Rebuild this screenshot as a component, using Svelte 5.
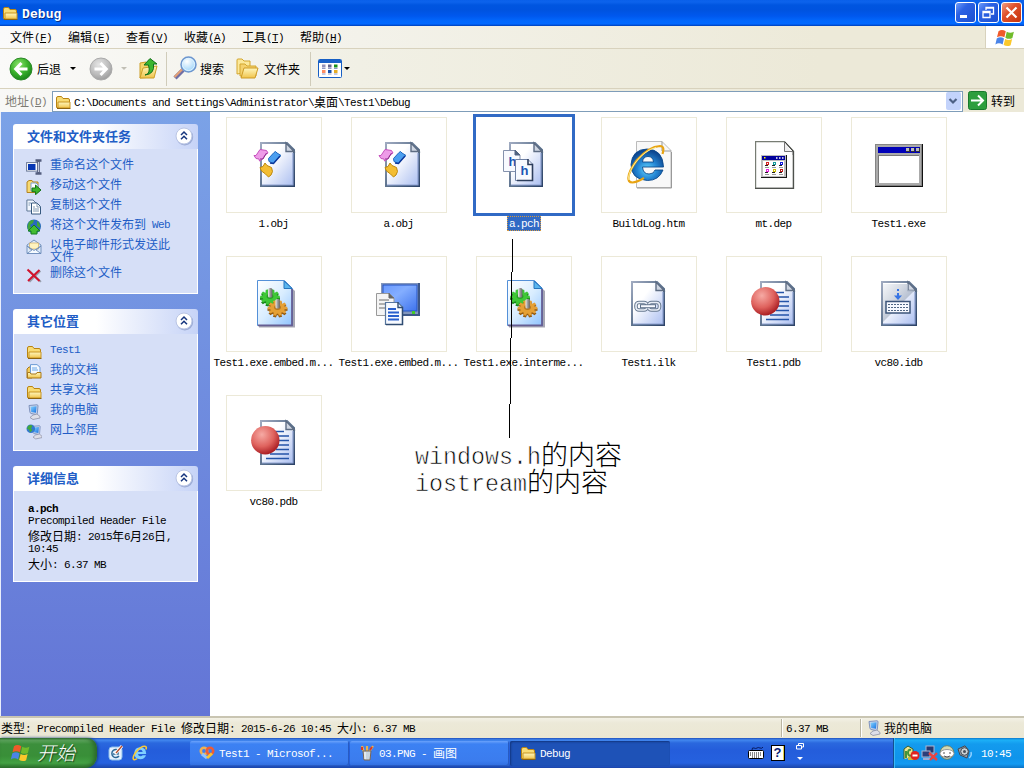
<script>
  const menus = [['文件', 'F'], ['编辑', 'E'], ['查看', 'V'], ['收藏', 'A'], ['工具', 'T'], ['帮助', 'H']];
  const tasks = [
    ['rename', ['重命名这个文件'], 20],
    ['move', ['移动这个文件'], 20],
    ['copy', ['复制这个文件'], 20],
    ['web', ['将这个文件发布到 Web'], 20],
    ['mail', ['以电子邮件形式发送此', '文件'], 28],
    ['delete', ['删除这个文件'], 20]
  ];
  const places = [
    ['folder', ['Test1'], 20],
    ['docs', ['我的文档'], 20],
    ['folder', ['共享文档'], 20],
    ['computer', ['我的电脑'], 20],
    ['network', ['网上邻居'], 20]
  ];
  const files = [
    ['obj', '1.obj'], ['obj', 'a.obj'], ['pch', 'a.pch', true], ['htm', 'BuildLog.htm'], ['dep', 'mt.dep'], ['exe', 'Test1.exe'],
    ['gear', 'Test1.exe.embed.m...'], ['res', 'Test1.exe.embed.m...'], ['gear', 'Test1.exe.interme...'], ['ilk', 'Test1.ilk'], ['pdb', 'Test1.pdb'], ['idb', 'vc80.idb'],
    ['pdb', 'vc80.pdb']
  ];
  const teeth = [0, 36, 72, 108, 144];
  const runs = (s) => s.match(/[\u2e80-\uffff]+|[^\u2e80-\uffff]+/g) ?? [];
  const isLatin = (r) => r.charCodeAt(0) < 0x2e80;
</script>

{#snippet t(s)}<span class="t">{#each runs(s) as r}<span class:l={isLatin(r)}>{r}</span>{/each}</span>{/snippet}

{#snippet page(x, w)}
  <path d="M{x + 1} 2H{x + w - 8}L{x + w - 1} 9V45H{x + 1}Z" fill="url(#paper)" stroke="url(#edge)" stroke-width="2" />
  <path d="M{x + 2} 44H{x + w - 2}V12" fill="none" stroke="#8b9fd0" stroke-width="1.2" />
  <path d="M{x + w - 9} 2V10.5H{x + w - 1}Z" fill="#cfd6e2" stroke="#5d6c83" stroke-width="1.4" />
{/snippet}

{#snippet cog(cx, cy, color, dark)}
  <g transform="translate({cx} {cy})">
    <g fill={dark} transform="translate(0 1.6) scale(1 .78)">
      {#each teeth as a}<rect x="-10" y="-1.6" width="20" height="3.2" transform="rotate({a})" />{/each}
      <circle r="7.4" />
    </g>
    <g fill={color} transform="scale(1 .78)">
      {#each teeth as a}<rect x="-9.8" y="-1.6" width="19.6" height="3.2" transform="rotate({a})" />{/each}
      <circle r="7.4" />
    </g>
    <ellipse cy="-.5" rx="3.4" ry="2.4" fill={dark} opacity=".6" />
    <rect x="-2" y="-9" width="4.4" height="9.5" rx="1.6" fill="url(#pin)" />
  </g>
{/snippet}

{#snippet smallFolder()}
  <path d="M1.5 13.5V4Q1.5 2.5 3 2.5H6.5L8 4.5H13Q14.5 4.5 14.5 6V13.5Z" fill="#f8dc75" stroke="#b98412" />
  <path d="M3 14V8H15V14Z" fill="url(#fold)" stroke="#c89522" />
  <path d="M2 14.5H15.5" stroke="#8d6412" />
{/snippet}

{#snippet pc()}
  <path d="M3 1.5L11 .8Q12 .8 12 2L11.3 9.5Q11 10.5 10 10.5L5 9.5Q4 9 3.9 8Z" fill="#cbd5ea" stroke="#7f93be" />
  <path d="M4.5 2.7L10.6 2.2L10 8.8L5.2 8Z" fill="url(#screen)" />
  <path d="M7 11L11 10L14 12.5V14L7 15.5L4 13.5Z" fill="#dedfe8" stroke="#8d90a5" stroke-width=".8" />
{/snippet}

{#snippet flag()}
  <path d="M3.2 3.3Q6 1.5 9 3.4L7.9 8.2Q5 6.4 2 8.2Z" fill="#f05a2a" />
  <path d="M9.8 3.8Q12.5 5.5 15.5 3.8L14.3 8.8Q11.5 10.3 8.7 8.5Z" fill="#70bb2b" />
  <path d="M1.8 9.1Q4.8 7.3 7.6 9.1L6.5 14Q3.5 12.1.7 14Z" fill="#4a84e8" />
  <path d="M8.5 9.5Q11.2 11.2 14.1 9.6L12.9 14.5Q10.2 16 7.3 14.3Z" fill="#fbc82b" />
{/snippet}

{#snippet ie(c)}
  <path fill-rule="evenodd" d="M8.2 2.2Q14 2.2 14.2 9H6Q6.3 11.3 8.5 11.3Q10 11.3 10.6 10.2H14Q12.6 14.2 8.3 14.2Q2.4 14 2.3 8.2Q2.5 2.4 8.2 2.2ZM6 7H10.7Q10.4 4.8 8.3 4.8Q6.3 4.9 6 7Z" fill={c} />
  <path d="M13.8 4.5Q15.2 1.5 12.8 1.2Q9 1 4.2 6.8Q.6 11.7 1.3 13.9Q2 15.6 5 13.6" fill="none" stroke="#f9c936" stroke-width="1.6" />
{/snippet}

{#snippet icon(name)}
  <svg class="i16" viewBox="0 0 16 16">
    {#if name === 'folder'}{@render smallFolder()}
    {:else if name === 'ie'}{@render ie('#7fd0ff')}
    {:else if name === 'computer'}{@render pc()}
    {:else if name === 'docs'}
      <path d="M1 14V5L3 3H6V14Z" fill="#f3cc59" stroke="#a9791b" />
      <path d="M4.5.6H11L14 3.2V12H4.5Z" fill="#f4f9ff" stroke="#6d9bd4" />
      <path d="M6 4H11M6 6H12" stroke="#69a6e8" />
      <path d="M1.5 14V8.5H4L5 10H10L11 8.5H15V14Z" fill="url(#fold)" stroke="#a9791b" />
    {:else if name === 'network'}
      <g transform="translate(3.4 1) scale(.9)">{@render pc()}</g>
      <circle cx="4.8" cy="4.8" r="4.3" fill="#3378cf" />
      <path d="M2 2Q5 0 6.5 2L5 4.5L6.5 6L4 8.5L3 5.5L1 5Z" fill="#42a93b" />
    {:else if name === 'rename'}
      <rect x=".6" y="3.6" width="11.5" height="8.5" fill="#fff" stroke="#6a7897" />
      <rect x="2" y="5" width="7.5" height="6" fill="#0636b4" />
      <path d="M9.5 1.5H15.5M9.5 14.5H15.5M12.5 2V14" stroke="#535d7e" stroke-width="2.6" />
      <path d="M12.5 3V13" stroke="#c5ccdf" stroke-width="1" />
    {:else if name === 'move'}
      <path d="M1 13.5V3L3 1.5H6L7 3H12V13.5Z" fill="#f7d971" stroke="#b38321" />
      <path d="M5 4H10L12 6V12H5Z" fill="#fff" stroke="#7b9fd2" />
      <path d="M6 9H9.5V6L15 11L9.5 15.7V12.7H6Z" fill="#3cb52b" stroke="#157517" />
    {:else if name === 'copy'}
      <path d="M.9 1H7L10 4V12H.9Z" fill="#f2f7ff" stroke="#607897" />
      <path d="M5.5 4H11L14.5 7.5V15H5.5Z" fill="#fff" stroke="#36597f" />
      <path d="M11 4V8H14.5M7 8H9M7 10H13M7 12H13M2.5 4H5M2.5 6H4" fill="none" stroke="#62819e" stroke-width=".8" />
    {:else if name === 'web'}
      <circle cx="8" cy="7.5" r="7" fill="#2869bf" />
      <path d="M3 3Q5 .5 8 1L7 4L4 6L5 8L3 12Q0 8 3 3ZM11 2Q15 5 14 9L11 7Z" fill="#41a63b" />
      <path d="M8 6L14 12H11L11 15L5 15V12H2Z" fill="#43bd31" stroke="#167c21" />
    {:else if name === 'mail'}
      <path d="M1 6L8 1L15 6V14.5H1Z" fill="#dceafb" stroke="#7794bd" />
      <path d="M3.5 4H12.5V10H3.5Z" fill="#fff3bf" stroke="#d4af62" stroke-width=".7" />
      <path d="M1 7L6 11L1 14.5H15L10 11L15 7L8 11.5Z" fill="#f6fbff" stroke="#6384b6" stroke-width=".8" />
    {:else if name === 'delete'}
      <path d="M2 2.5L14 14M13.5 3L2.5 14" stroke="#989fac" stroke-width="2" transform="translate(.9 .9)" />
      <path d="M1.5 2.5L13.5 14M13.5 3L2 14" stroke="#d2132d" stroke-width="2" />
    {/if}
  </svg>
{/snippet}

{#snippet fileIcon(name)}
  <svg class="i48" viewBox="0 0 48 48">
    {#if name === 'obj'}
      {@render page(10, 35)}
      <g stroke-width="1">
        <path d="M4 14.5H6L10 8.5L16.5 9.5L18 12L15 14L12.5 18L9.5 20L9 18L6 17.5Z" fill="#ee9ce8" stroke="#c650bd" />
        <path d="M10 18L13 18L16.5 12" stroke="#8b2c8c" fill="none" />
        <path d="M18.5 17.5L24 11.5L25.5 10.5L27 12L31 14.5L27 18L23.5 22.5L19 20.5Z" fill="#4b9ff0" stroke="#1e68be" />
        <path d="M20 22L23.5 22.5L30 15" stroke="#0a369a" fill="none" stroke-width="1.4" />
        <path d="M10 26.5L13 25.5L15 22L17 24.5L21.5 26.5L22.5 30.5L21 34L18.5 36L15.5 33L11.5 30Z" fill="#f3bd32" stroke="#bd880b" />
      </g>
    {:else if name === 'pch'}
      {@render page(9, 34)}
      <path d="M3.5 9.5H15L20 14V30.5H3.5Z" fill="#f8faff" stroke="#8592ad" /><path d="M15 9V14H20Z" fill="#526582" stroke="#526582" />
      <text x="8.5" y="25" class="h">h</text>
      <path d="M15.5 18.5H28L32.5 23V39.5H15.5Z" fill="#f8faff" stroke="#7082a5" /><path d="M28 18V23.5H32.5V39.5H17" fill="none" stroke="#2d3e5c" stroke-width="1.6" />
      <text x="20.5" y="34" class="h">h</text>
    {:else if name === 'htm'}
      <path d="M11.5.5H37L46 9.5V46.5H11.5Z" fill="#f8f8f8" stroke="#bbb" /><path d="M37 .5V10H46M46.5 11V47H12" fill="none" stroke="#999" />
      <path fill-rule="evenodd" d="M22 8Q38 8.5 38.5 26H17.5Q18 33 24 33Q29 33 30 29H38Q34 39.5 22.5 39.5Q6 38.5 6 23.5Q7 8.5 22 8ZM17.5 21H28.5Q28 15.5 23 15.5Q18 15.5 17.5 21Z" fill="url(#ieb)" stroke="#0b4a8c" stroke-width=".9" />
      <path d="M37.5 13Q40 5 35 5Q24 5.5 12 19Q1 34 4 40Q7 44 19 37" fill="none" stroke="#e8a413" stroke-width="2.2" />
      <path d="M31 6.5Q20 9 10 22Q2 34 4 39" fill="none" stroke="#fff19a" stroke-width="1" />
    {:else if name === 'dep'}
      <path d="M5.6.6H34.5L43.4 10V47.4H5.6Z" fill="#fefefe" stroke="#777c73" stroke-width="1.2" />
      <path d="M34.5 1V10.5H43V14" fill="#eee" stroke="#777" /><path d="M35 1L43 10" stroke="#333" />
      <path d="M43.5 10V47.5H5" fill="none" stroke="#4e514d" stroke-width="1.3" />
      <rect x="11" y="14" width="26" height="23" fill="#161616" /><rect x="11" y="14" width="25" height="22" fill="#bdbdbd" />
      <rect x="12" y="15" width="23" height="4" fill="#00009b" /><path d="M26 17H34" stroke="#fff" stroke-width="1.5" stroke-dasharray="1.5 1.5" /><rect x="14" y="16" width="1.5" height="1.5" fill="#ff0" />
      <rect x="13" y="20" width="21" height="15" fill="#fff" />
      {#each ['#d32020', '#149b99', '#1018dc', '#e521df', '#c8bc00', '#bd1a19'] as c, i}
        <g transform="translate({15 + (i % 3) * 7} {21 + Math.floor(i / 3) * 7})"><rect width="3" height="3" x="1" fill={c} /><path d="M0 3.5H3" stroke="#222" /><path d="M0 5.5H4" stroke="#999" /><rect x="2" y="1" width="1" height="1" fill="#fff" /></g>
      {/each}
    {:else if name === 'exe'}
      <rect x="0" y="3" width="48" height="43" fill="#111" /><rect x="0" y="3" width="47" height="42" fill="#858585" /><rect x="1" y="4" width="45" height="40" fill="#aaa" />
      <rect x="3" y="6" width="42" height="6" fill="#0000b8" />
      {#each [31, 36, 41] as x}<rect {x} y="7" width="4" height="4" fill="#333" /><rect {x} y="7" width="3" height="3" fill="#bbb" />{/each}
      <rect x="3" y="14" width="41" height="28" fill="#777" /><rect x="4" y="15" width="40" height="27" fill="#fff" />
    {:else if name === 'gear'}
      <path d="M9 3H36L45 11V47.5H9Z" fill="#3a3a56" opacity=".45" />
      <path d="M7.5.5H34.5L42.5 8.5V45.5H7.5Z" fill="url(#gearPage)" stroke="#5490d8" />
      <path d="M42 9V45.3H8" fill="none" stroke="#665e93" stroke-width="1.8" /><path d="M34 1V8.5H42Z" fill="#59b5ee" stroke="#2876bd" />
      {@render cog(20, 17, '#3fc736', '#19861b')}
      {@render cog(27.5, 28, '#e5a035', '#965b10')}
    {:else if name === 'res'}
      <rect x="6" y="3" width="39" height="33" fill="#3d5786" /><rect x="6" y="3" width="37" height="31" fill="#8296bd" /><rect x="8" y="5" width="34" height="26" fill="url(#monitor)" stroke="#2454c5" />
      <rect x="37" y="31" width="3" height="3" fill="#43cb26" />
      <path d="M1.5 13.5H14L19 18V35.5H1.5Z" fill="#f4f4f4" stroke="#999" /><path d="M14 13V18H19" fill="#666" stroke="#666" /><path d="M4 20H14M4 24H16M4 28H12" stroke="#999" stroke-width="1.6" />
      <path d="M10.5 22.5H23L27.5 27V44.5H10.5Z" fill="#f7faff" stroke="#57769e" stroke-width="1.2" /><path d="M23 22V27.5H27.5V44.5H11" fill="none" stroke="#304c72" stroke-width="1.4" /><path d="M13 29H21M13 32.5H24M13 36H24M13 39.5H24" stroke="#295fce" stroke-width="1.8" />
    {:else if name === 'ilk'}
      {@render page(6, 34)}
      <g fill="none" stroke="#66788f" stroke-width="3.6"><rect x="11" y="22.5" width="11" height="7.5" rx="3" /><rect x="23.5" y="22.5" width="11" height="7.5" rx="3" /></g>
      <g fill="none" stroke="#e9eef7" stroke-width="1.6"><rect x="11" y="22.5" width="11" height="7.5" rx="3" /><rect x="23.5" y="22.5" width="11" height="7.5" rx="3" /></g>
      <path d="M15 26.2H31" stroke="#5f728b" stroke-width="4" /><path d="M16 26.2H30" stroke="#f8faff" stroke-width="2" />
    {:else if name === 'pdb'}
      {@render page(10, 35)}
      <path d="M24 12.5H34M27 17H39M28 21.5H39M28 26H39M26 30.5H39M20 35H39M16 39.5H39" stroke="#2453a8" stroke-width="1.5" />
      <circle cx="15.3" cy="21.3" r="14.2" fill="url(#ball)" />
    {:else if name === 'idb'}
      {@render page(6, 36)}
      <path d="M8 4H33V10H40L8 42Z" fill="url(#shade)" opacity=".75" />
      <rect x="11" y="21.5" width="24" height="11.5" fill="#f7f9ff" stroke="#3d557a" stroke-width="1.5" />
      <path d="M13 24.5H34M13 27.5H34M13 30.5H34" stroke="#526885" stroke-dasharray="2 1" />
      <path d="M23 9V11M23 13V16" stroke="#3774e4" stroke-width="2" /><path d="M19 15.5H27L23 20Z" fill="#3774e4" />
    {/if}
  </svg>
{/snippet}

{#snippet head(title)}
  <header class="phead">
    <b>{title}</b>
    <svg width="20" height="20" viewBox="0 0 20 20"><circle cx="10.8" cy="11" r="8.4" fill="#7d8fc0" opacity=".6" /><circle cx="10" cy="10" r="8" fill="#fff" stroke="#bac5e4" /><path d="M7 9L10 6L13 9M7 13.3L10 10.3L13 13.3" fill="none" stroke="#16357e" stroke-width="1.5" /></svg>
  </header>
{/snippet}

{#snippet links(list)}
  {#each list as [ic, lines, h]}
    <div class="link" style:height="{h}px">
      {@render icon(ic)}
      <div class="lines">{#each lines as line}<div>{@render t(line)}</div>{/each}</div>
    </div>
  {/each}
{/snippet}

<svg class="defs" width="0" height="0">
  <defs>
    <linearGradient id="paper" x1="0" y1="0" x2="1" y2="1"><stop offset=".35" stop-color="#fff" /><stop offset="1" stop-color="#a9bdf0" /></linearGradient>
    <linearGradient id="edge" x1="0" y1="0" x2="1" y2="1"><stop offset="0" stop-color="#9faac0" /><stop offset=".6" stop-color="#526985" /><stop offset="1" stop-color="#2c4267" /></linearGradient>
    <linearGradient id="gearPage" x1="0" y1="0" x2="1" y2="1"><stop offset="0" stop-color="#fff" /><stop offset=".5" stop-color="#d9edff" /><stop offset="1" stop-color="#8fc3ff" /></linearGradient>
    <linearGradient id="pin"><stop offset="0" stop-color="#eee" /><stop offset=".5" stop-color="#999" /><stop offset="1" stop-color="#666" /></linearGradient>
    <linearGradient id="monitor" x1="0" y1="0" x2="1" y2="1"><stop offset="0" stop-color="#6b9aff" /><stop offset=".4" stop-color="#84aeff" /><stop offset="1" stop-color="#3e73ed" /></linearGradient>
    <linearGradient id="shade" x1="0" y1="0" x2="1" y2="1"><stop offset="0" stop-color="#f2f4f8" /><stop offset="1" stop-color="#6d7f9b" /></linearGradient>
    <linearGradient id="fold" x1="0" y1="0" x2="0" y2="1"><stop offset="0" stop-color="#fff7bd" /><stop offset="1" stop-color="#f0c44c" /></linearGradient>
    <linearGradient id="screen" x1="0" y1="0" x2="1" y2="1"><stop offset="0" stop-color="#88d5ff" /><stop offset="1" stop-color="#1772e2" /></linearGradient>
    <radialGradient id="ieb" cx=".5" cy=".65" r=".6"><stop offset="0" stop-color="#66d8ff" /><stop offset=".5" stop-color="#2486d4" /><stop offset="1" stop-color="#0c458f" /></radialGradient>
    <radialGradient id="ball" cx=".38" cy=".3" r=".7"><stop offset="0" stop-color="#f6aaa4" /><stop offset=".6" stop-color="#df625d" /><stop offset="1" stop-color="#ab1f24" /></radialGradient>
    <radialGradient id="green" cx=".4" cy=".3" r=".75"><stop offset="0" stop-color="#8be26b" /><stop offset=".55" stop-color="#39b12b" /><stop offset="1" stop-color="#168018" /></radialGradient>
    <radialGradient id="grey" cx=".4" cy=".3" r=".75"><stop offset="0" stop-color="#e5e5e5" /><stop offset=".6" stop-color="#bcbcbc" /><stop offset="1" stop-color="#999" /></radialGradient>
    <radialGradient id="lens" cx=".4" cy=".3" r=".8"><stop offset="0" stop-color="#fff" /><stop offset="1" stop-color="#8ccdf9" /></radialGradient>
  </defs>
</svg>

<div class="screen">
  <div class="title">
    {@render icon('folder')}<b>{@render t('Debug')}</b>
    <div class="wb"><svg viewBox="0 0 21 21"><rect x="5" y="13" width="7" height="3" fill="#fff" /></svg></div>
    <div class="wb"><svg viewBox="0 0 21 21"><path d="M8 8V5.5H15.5V12H13M8 6H15" fill="none" stroke="#fff" stroke-width="1.3" /><path d="M5 9.5H12V15.5H5ZM5 10.5H12" fill="none" stroke="#fff" stroke-width="1.3" /></svg></div>
    <div class="wb close"><svg viewBox="0 0 21 21"><path d="M5.5 5.5L15.5 15.5M15.5 5.5L5.5 15.5" stroke="#fff" stroke-width="2.2" /></svg></div>
  </div>

  <div class="menu">
    {#each menus as [name, key]}<div class="mi">{name}<span class="l">(<u>{key}</u>)</span></div>{/each}
    <div class="throbber"><svg width="21" height="20" viewBox="0 0 16 16">{@render flag()}</svg></div>
  </div>

  <div class="tools">
    <svg class="round" viewBox="0 0 24 24"><circle cx="12" cy="12" r="11" fill="url(#green)" stroke="#2c8928" /><path d="M12.5 6L6.7 12L12.5 18M7.5 12H18.5" fill="none" stroke="#fff" stroke-width="3" /></svg>
    <span class="back">后退</span><i class="tri"></i>
    <svg class="round fwd" viewBox="0 0 24 24"><circle cx="12" cy="12" r="11" fill="url(#grey)" stroke="#aaa" /><path d="M11.5 6L17.3 12L11.5 18M16.5 12H5.5" fill="none" stroke="#fff" stroke-width="3" /></svg>
    <i class="tri dim"></i>
    <svg class="up" width="20" height="24" viewBox="0 0 20 24"><path d="M1 21V6L7 5L9 7H14V20Z" fill="#f4d568" stroke="#cd9e27" /><path d="M1 21L4 11L18 9L15 21Z" fill="url(#fold)" stroke="#cd9e27" /><path d="M6 18Q12 17 9.5 8H5L11 1.5L18 7H14.5Q16 17 6 18Z" fill="#3bb62f" stroke="#16701c" /></svg>
    <i class="sep s1"></i>
    <svg width="25" height="25" viewBox="0 0 25 25"><path d="M2 22L10 14" stroke="#6f6fa5" stroke-width="4.5" /><path d="M1.5 21L9.5 13" stroke="#e4a076" stroke-width="2.2" /><circle cx="15.5" cy="8.5" r="7.5" fill="url(#lens)" stroke="#6d96ce" stroke-width="1.5" /><circle cx="15.5" cy="8.5" r="6" fill="none" stroke="#dff3ff" stroke-width="1" /></svg>
    <span class="search">搜索</span>
    <svg class="folders" width="24" height="22" viewBox="0 0 24 22"><path d="M1 16V2Q1 1 2 1H6L8 3H14V14Z" fill="#fce99a" stroke="#d3a62e" /><path d="M4 18V6H9L11 8H20V18Z" fill="#f5d26d" stroke="#d3a62e" /><path d="M5 20L8 10H22L19 20Z" fill="url(#fold)" stroke="#ce9b25" /></svg>
    <span class="ft">文件夹</span><i class="sep s2"></i>
    <svg class="views" width="24" height="19" viewBox="0 0 24 19"><rect x=".5" y=".5" width="23" height="18" rx="1" fill="#fff" stroke="#175fc4" /><rect x="1" y="1" width="22" height="3" fill="#1962c9" />
      {#each ['#9292b8', '#65658e', '#18911c', '#ff8d62', '#164fae', '#e6ac25'] as c, i}<rect x={4 + (i % 3) * 6} y={i > 2 ? 11 : 5.5} width="3.5" height="3" fill={c} /><path d="M{4 + (i % 3) * 6} {i > 2 ? 15 : 9.5}H{7.5 + (i % 3) * 6}" stroke="#8f99c4" />{/each}
    </svg><i class="tri vt"></i>
  </div>

  <div class="address">
    <div class="addr-label">地址<span class="l">(<u>D</u>)</span></div>
    <div class="field">{@render icon('folder')}{@render t('C:\\Documents and Settings\\Administrator\\桌面\\Test1\\Debug')}
      <div class="drop"><svg width="14" height="16" viewBox="0 0 14 16"><path d="M3.5 6L7 9.5L10.5 6" fill="none" stroke="#4d6185" stroke-width="2.2" /></svg></div>
    </div>
    <svg class="go" viewBox="0 0 19 19"><rect x=".5" y=".5" width="18" height="18" rx="2" fill="#2d9e3d" stroke="#18792b" /><path d="M3 9.5H15M10 4.5L15 9.5L10 14.5" fill="none" stroke="#fff" stroke-width="2" /></svg>
    <span>转到</span>
  </div>

  <div class="main">
    <aside>
      <section class="p1">{@render head('文件和文件夹任务')}<div class="body">{@render links(tasks)}</div></section>
      <section class="p2">{@render head('其它位置')}<div class="body">{@render links(places)}</div></section>
      <section class="p3">{@render head('详细信息')}
        <div class="body details">
          <div><b>{@render t('a.pch')}</b></div>
          <div>{@render t('Precompiled Header File')}</div>
          <div class="gap">{@render t('修改日期: 2015年6月26日,')}</div>
          <div>{@render t('10:45')}</div>
          <div class="gap">{@render t('大小: 6.37 MB')}</div>
        </div>
      </section>
    </aside>
    <main>
      {#each files as [ic, name, sel]}
        <div class="file" class:sel><div class="thumb">{@render fileIcon(ic)}</div><div class="name">{@render t(name)}</div></div>
      {/each}
      <svg class="line" width="6" height="200" viewBox="0 0 6 200" shape-rendering="crispEdges"><path d="M3.5 0V33M2.5 33V99M1.5 99V165M.5 165V199" stroke="#000" /></svg>
      <div class="note"><div>{@render t('windows.h的内容')}</div><div>{@render t('iostream的内容')}</div></div>
    </main>
  </div>

  <footer class="status">
    <div class="st1">{@render t('类型: Precompiled Header File 修改日期: 2015-6-26 10:45 大小: 6.37 MB')}</div>
    <div class="st2">{@render t('6.37 MB')}</div>
    <div class="st3">{@render icon('computer')}<span>我的电脑</span></div>
  </footer>

  <div class="taskbar">
    <div class="start"><svg width="20" height="20" viewBox="0 0 16 16">{@render flag()}</svg><em>开始</em></div>
    <div class="quick">
      <svg width="16" height="16" viewBox="0 0 16 16"><rect x="1" y="2" width="13" height="13" rx="3" fill="#e6f2ff" stroke="#8fc0ea" /><path d="M11 6A4 4 0 1 0 11 11M5 9H10V6" fill="none" stroke="#2d6997" stroke-width="1.5" /><path d="M7 9L14 1" stroke="#fff" stroke-width="3" /><path d="M8 8L14 1" stroke="#b64e2d" stroke-width="1.3" /></svg>
      {@render icon('ie')}
    </div>
    <div class="tb"><svg width="16" height="16" viewBox="0 0 16 16"><circle cx="5" cy="6" r="3.2" fill="none" stroke="#f0b050" stroke-width="2.6" /><circle cx="11" cy="6" r="3.2" fill="none" stroke="#ee5c35" stroke-width="2.6" /><path d="M3 9L8 13" stroke="#8fc3ff" stroke-width="3" /><path d="M8 13L13 8.5" stroke="#f5c433" stroke-width="3" /></svg>{@render t('Test1 - Microsof...')}</div>
    <div class="tb"><svg width="16" height="16" viewBox="0 0 16 16"><path d="M5 7L3 1M8 7V1M10 7L14 1" stroke="#e9b34e" stroke-width="2.2" /><path d="M3 2V5M13 2L11 5" stroke="#d8392b" stroke-width="2" /><path d="M4 6H12L11 15H5Z" fill="#c9d5df" stroke="#7b6655" /><path d="M6 7V14" stroke="#fff" /></svg>{@render t('03.PNG - 画图')}</div>
    <div class="tb active">{@render icon('folder')}{@render t('Debug')}</div>
    <div class="lang">
      <svg width="17" height="14" viewBox="0 0 17 14"><path d="M4 4Q4 1 6 2T9 2T12 2T15 1" fill="none" stroke="#071c64" /><rect x=".5" y="4.5" width="15" height="8" rx="1" fill="#fff" stroke="#000" /><path d="M2 7H14M2 9H14M4 11H12" stroke="#111" stroke-dasharray="1 1" /></svg>
      <div class="help">?</div>
      <svg width="10" height="20" viewBox="0 0 10 20"><path d="M3.5 3V1.5H8.5V5H7M1.5 3.5H6.5V7H1.5Z" fill="none" stroke="#fff" /><path d="M2 15H8L5 18Z" fill="#fff" /></svg>
    </div>
    <div class="tray">
      <svg width="17" height="16" viewBox="0 0 17 16"><path d="M1 14V4L5 1L10 4V12" fill="#efe58f" stroke="#365b2c" /><path d="M3 13V6M8 5Q5 4 5 8T10 10" stroke="#43943a" stroke-width="2" fill="none" /><rect x="5" y="12" width="8" height="3" fill="#cbb739" /><circle cx="12" cy="10.5" r="4.5" fill="#df251f" /><path d="M9.5 10.5H14.5" stroke="#fff" stroke-width="2" /></svg>
      <svg width="17" height="16" viewBox="0 0 17 16"><rect x="5" y="1" width="8" height="7" fill="#26386f" stroke="#abb6d1" /><rect x="1" y="6" width="8" height="6" fill="#2b3e7a" stroke="#abb6d1" /><path d="M2 14H9M10 10H13" stroke="#9bacd5" stroke-width="2" /><path d="M8 8L16 15M16 8L9 15" stroke="#e94441" stroke-width="2.4" /></svg>
      <svg width="17" height="16" viewBox="0 0 17 16"><circle cx="8" cy="7.5" r="6.8" fill="#d4dab4" stroke="#68806a" /><ellipse cx="8" cy="8.5" rx="7" ry="4" fill="#fff" stroke="#999" /><path d="M5 7V9M11 7V9M5 11Q8 13 11 11" fill="none" stroke="#555" /></svg>
      <svg width="17" height="16" viewBox="0 0 17 16"><path d="M1 4L8 .8L12 6L10 13L3 10Z" fill="#9aa1a8" stroke="#414b57" /><circle cx="7.5" cy="6.5" r="3.8" fill="#ccd1d3" stroke="#414a55" /><circle cx="7.5" cy="6.5" r="1.5" fill="#48515d" /><path d="M12 13Q15 11 14 7" fill="none" stroke="#8fd0ff" stroke-width="1.5" /></svg>
      <span class="clock">{@render t('10:45')}</span>
    </div>
  </div>
</div>

<style>
  :global(body) { margin: 0; overflow: hidden; background: #fff; }
  .defs { position: absolute; }
  .screen { width: 1024px; height: 768px; display: flex; flex-direction: column; overflow: hidden; font: 12px/12px "Noto Sans CJK SC", "Liberation Mono", sans-serif; color: #000; }
  .screen * { box-sizing: border-box; }
  svg { display: block; flex: none; }
  .t { white-space: pre; }
  .l { font-family: "Liberation Mono", monospace; font-size: 11px; line-height: 0; letter-spacing: -0.6px; vertical-align: 1px; white-space: pre; }
  .i16 { width: 16px; height: 16px; }
  .i48 { width: 48px; height: 48px; }
  .h { font: bold 13px "Liberation Sans", sans-serif; fill: #1b57b4; }

  .title { height: 26px; flex: none; display: flex; align-items: center; padding: 0 2px 1px; background: linear-gradient(#0a60ea 0, #0d63ec 2px, #0055e0 5px, #0053df 10px, #0058ee 16px, #0268fd 21px, #0269ff 24px, #0050d8 25px, #0042ba); color: #fff; }
  .title b { margin: 0 auto 0 4px; text-shadow: 1px 1px #0a2f85; }
  .title .icon { margin-top: -1px; }
  .title b :global(.l) { font-size: 13px; letter-spacing: 0.1px; vertical-align: 0; }
  .wb { width: 21px; height: 21px; margin-left: 2px; border: 1px solid #fff; border-radius: 3px; background: linear-gradient(135deg, #6f9dfb, #2c62e4 35%, #1c4fd0); }
  .wb svg { width: 21px; height: 21px; margin: -1px; }
  .wb.close { background: linear-gradient(135deg, #f09e85, #e0512c 40%, #c53510); }

  .menu { height: 23px; flex: none; display: flex; align-items: center; padding-left: 2px; border-bottom: 1px solid #d8d2bd; background: linear-gradient(90deg, #fafafa, #f3f2ea 35%, #edead9 80%); }
  .mi { width: 58px; padding: 0 0 1px 8px; white-space: nowrap; }
  .throbber { margin-left: auto; width: 39px; height: 22px; background: #fff; border-left: 1px solid #d8d2bd; padding: 1px 8px; }

  .tools { height: 40px; flex: none; display: flex; align-items: center; padding-left: 9px; border-bottom: 1px solid #d8d2bd; background: linear-gradient(90deg, #fafaf9, #f1f0e5 35%, #ece9d8 80%); }
  .round { width: 24px; height: 24px; }
  .back { margin-left: 4px; width: 24px; }
  .tri { border: 3px solid transparent; border-top: 3px solid #000; border-bottom: 0; margin-left: 9px; }
  .fwd { margin-left: 13px; }
  .dim { border-top-color: #c1bfb5; margin-left: 8px; }
  .up { margin-left: 12px; }
  .sep { width: 1px; height: 34px; background: #d0ccba; }
  .s1 { margin: 0 6px 0 7px; }
  .search { margin-left: 2px; width: 24px; }
  .folders { margin-left: 12px; }
  .ft { margin-left: 4px; width: 36px; }
  .s2 { margin: 0 7px 0 10px; }
  .vt { margin-left: 2px; }

  .address { height: 23px; flex: none; display: flex; align-items: center; padding: 0 0 0 5px; background: linear-gradient(90deg, #f8f8f6, #f1f0e5 35%, #ece9d8 80%); }
  .addr-label { width: 47px; color: #7d7b73; }
  .field { width: 911px; height: 21px; margin-top: 1px; display: flex; align-items: center; border: 1px solid #7f9db9; background: #fff; padding: 1px 1px 0 2px; gap: 3px; }
  .drop { margin: 0 0 1px auto; width: 15px; height: 18px; border-radius: 2px; background: #c3d3fb; padding-top: 1px; }
  .go { width: 19px; height: 19px; margin: 0 4px 0 5px; }

  .main { height: 604px; flex: none; display: flex; }
  aside { width: 210px; border-left: 1px solid #e9eefb; padding: 12px 12px 0; background: linear-gradient(#7ba2e7, #6375d6); }
  section { display: flex; flex-direction: column; margin-bottom: 15px; }
  .p1 { height: 170px; }
  .p2 { height: 142px; }
  .p3 { height: 116px; }
  .phead { height: 25px; flex: none; display: flex; align-items: center; justify-content: space-between; padding: 0 4px 0 14px; border-radius: 3px 3px 0 0; background: linear-gradient(90deg, #fff 45%, #c6d3f7); color: #215dc6; }
  .phead b { font-size: 13px; margin-bottom: 1px; }
  .phead svg { margin-bottom: 1px; }
  .body { flex: 1; border: 1px solid #fff; border-top: 0; background: #d6dff7; padding: 10px 0 0 12px; color: #215dc6; }
  .link { display: flex; gap: 8px; }
  .lines { margin-top: -1px; white-space: nowrap; }
  .details { padding: 11px 0 0 14px; color: #000; white-space: nowrap; }
  .details .gap { margin-top: 4px; }

  main { width: 814px; position: relative; display: grid; grid-template-columns: repeat(6, 125px); grid-auto-rows: 139px; padding: 5px 0 0 1px; background: #fff; }
  .file { display: flex; flex-direction: column; align-items: center; }
  .thumb { width: 96px; height: 96px; flex: none; border: 1px solid #ece9d8; padding: 23px; margin-left: 1px; }
  .name { height: 15px; margin-top: 3px; padding: 1px 2px; white-space: nowrap; }
  .sel .thumb { border-color: #fff; box-shadow: 0 0 0 3px #316ac5; }
  .sel .name { background: #316ac5; color: #fff; outline: 1px dotted #d69a42; outline-offset: -1px; margin-left: 1px; }
  .line { position: absolute; left: 299px; top: 127px; }
  .note { position: absolute; left: 205px; top: 328px; font-size: 27px; line-height: 27px; font-weight: 300; white-space: nowrap; }
  .note :global(.l) { font-size: 23.33px; letter-spacing: 0; -webkit-text-stroke: 0.6px #fff; }

  .status { height: 22px; flex: none; display: flex; align-items: center; border-top: 2px solid #c9c5b2; background: linear-gradient(#f3f1e6, #ece9d8 5px, #ebe7d3); }
  .status > div { height: 18px; display: flex; align-items: center; }
  .st1 { width: 781px; padding-left: 1px; }
  .st2 { width: 79px; border-left: 1px solid #b9b5a2; box-shadow: inset 1px 0 #fff; padding-left: 4px; }
  .st3 { flex: 1; border-left: 1px solid #b9b5a2; box-shadow: inset 1px 0 #fff; padding-left: 5px; gap: 2px; }

  .taskbar { height: 30px; flex: none; display: flex; align-items: center; color: #fff; background: linear-gradient(#1f4fbc 0, #4288ef 2px, #2a68de 5px, #245ddb 12px, #2561df 25px, #1b45a8 30px); }
  .start { width: 97px; height: 30px; display: flex; align-items: center; gap: 7px; padding: 0 0 3px 10px; border-radius: 0 10px 12px 0; background: linear-gradient(#2e6e2f 0, #61a861 2px, #3c8f3c 6px, #398f38 18px, #43a143 25px, #2b712c 30px); box-shadow: inset -3px 0 4px #2b682b, 1px 0 3px #153e86; }
  .start em { font-size: 19px; line-height: 20px; font-weight: 300; text-shadow: 1px 1px 1px #193d19; }
  .quick { display: flex; gap: 8px; width: 93px; padding-left: 11px; }
  .tb { width: 159px; height: 25px; margin-right: 1px; display: flex; align-items: center; gap: 4px; padding-left: 9px; border-radius: 2px; background: linear-gradient(#6aa2fb, #3c81f3 3px, #3b7cee 20px, #306dde); box-shadow: inset -1px -1px #285bc3; white-space: nowrap; }
  .tb.active { width: 160px; padding-left: 10px; background: #1e52b7; box-shadow: inset 1px 1px 2px #12367f; }
  .lang { display: flex; align-items: center; margin-left: 77px; gap: 7px; }
  .lang > svg:last-child { margin: -3px 0 0 4px; }
  .help { width: 12px; height: 14px; background: #fff; outline: 1px solid #000; border-right: 1px solid #e1d24c; color: #071b75; font: bold 13px/14px "Liberation Sans", sans-serif; text-align: center; }
  .tray { margin-left: auto; width: 131px; height: 30px; display: flex; align-items: center; gap: 1px; padding-left: 9px; border-left: 1px solid #12508f; box-shadow: inset 1px 0 #39b8f7; background: linear-gradient(#0d78cb 0, #1cb0f7 2px, #139bee 6px, #0f94eb 20px, #129af2 26px, #0d72c3 30px); }
  .clock { margin-left: 6px; }
</style>
